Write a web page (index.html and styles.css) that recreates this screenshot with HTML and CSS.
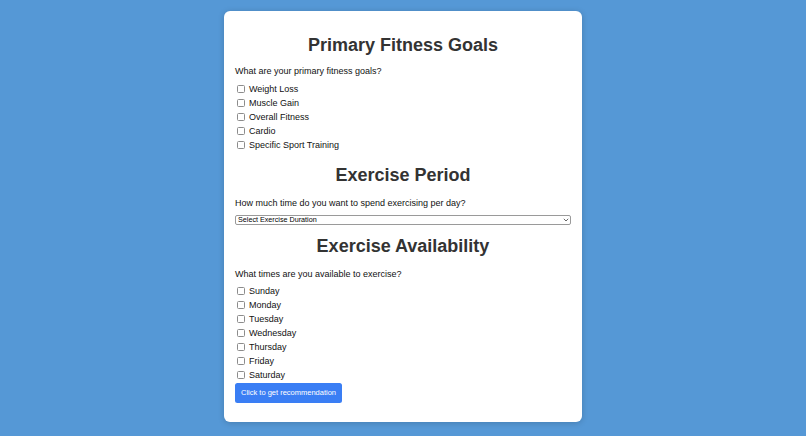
FILE: index.html
```html
<!DOCTYPE html>
<html lang="en">
<head>
<meta charset="utf-8">
<title>Fitness Goals</title>
<link rel="stylesheet" href="styles.css">
</head>
<body>
<main class="card">
  <form class="form">
    <h1 class="title">Primary Fitness Goals</h1>
    <p class="question">What are your primary fitness goals?</p>
    <div class="options">
      <label class="option"><input type="checkbox" class="check"><span>Weight Loss</span></label>
      <label class="option"><input type="checkbox" class="check"><span>Muscle Gain</span></label>
      <label class="option"><input type="checkbox" class="check"><span>Overall Fitness</span></label>
      <label class="option"><input type="checkbox" class="check"><span>Cardio</span></label>
      <label class="option"><input type="checkbox" class="check"><span>Specific Sport Training</span></label>
    </div>

    <h1 class="title title-mid">Exercise Period</h1>
    <p class="question q2">How much time do you want to spend exercising per day?</p>
    <div class="select-wrap">
      <select class="select">
        <option>Select Exercise Duration</option>
        <option>15 minutes</option>
        <option>30 minutes</option>
        <option>45 minutes</option>
        <option>1 hour</option>
      </select>
      <svg class="chevron" width="6" height="4" viewBox="0 0 6 4"><path d="M0.8 0.8 L3 3 L5.2 0.8" fill="none" stroke="#555" stroke-width="0.9"/></svg>
    </div>

    <h1 class="title title-low">Exercise Availability</h1>
    <p class="question q3">What times are you available to exercise?</p>
    <div class="options days">
      <label class="option"><input type="checkbox" class="check"><span>Sunday</span></label>
      <label class="option"><input type="checkbox" class="check"><span>Monday</span></label>
      <label class="option"><input type="checkbox" class="check"><span>Tuesday</span></label>
      <label class="option"><input type="checkbox" class="check"><span>Wednesday</span></label>
      <label class="option"><input type="checkbox" class="check"><span>Thursday</span></label>
      <label class="option"><input type="checkbox" class="check"><span>Friday</span></label>
      <label class="option"><input type="checkbox" class="check"><span>Saturday</span></label>
    </div>
    <button type="button" class="btn">Click to get recommendation</button>
  </form>
</main>
</body>
</html>
```
FILE: styles.css
```css
html, body {
  margin: 0;
  padding: 0;
}
body {
  background: #5598d6;
  font-family: "Liberation Sans", Arial, Helvetica, sans-serif;
  font-size: 9px;
  color: #111;
  height: 436px;
  overflow: hidden;
}
.card {
  width: 336px;
  margin: 11px auto 0;
  padding: 12px 11px 19px;
  background: #ffffff;
  border-radius: 6px;
  box-shadow: 0 1px 6px rgba(0, 0, 0, 0.18);
}
.form {
  display: flex;
  flex-direction: column;
}
.title {
  margin: 12px 0 0;
  font-size: 18px;
  line-height: 21px;
  font-weight: bold;
  text-align: center;
  color: #333;
}
.title-mid {
  margin-top: 13px;
}
.title-low {
  margin-top: 11px;
}
.question {
  margin: 10px 0 0;
  line-height: 10px;
}
.q2 {
  margin-top: 12px;
}
.q3 {
  margin-top: 12px;
}
.options {
  display: flex;
  flex-direction: column;
  margin-top: 6px;
}
.days {
  margin-top: 5px;
}
.option {
  display: flex;
  align-items: center;
  height: 14px;
  line-height: 14px;
}
.check {
  -webkit-appearance: none;
  appearance: none;
  width: 7.5px;
  height: 7.5px;
  margin: 0 4.5px 0 2px;
  border: 1px solid #8c8c8c;
  border-radius: 1.5px;
  background: #fff;
  box-sizing: border-box;
  flex: none;
}
.select-wrap {
  position: relative;
  margin-top: 7px;
}
.select {
  -webkit-appearance: none;
  appearance: none;
  display: block;
  width: 100%;
  height: 10px;
  margin: 0;
  padding: 0 0 0 2px;
  border: 0.75px solid #9a9a9a;
  border-radius: 2px;
  background: #fff;
  font-family: "Liberation Sans", Arial, Helvetica, sans-serif;
  font-size: 7.2px;
  line-height: 8px;
  color: #000;
  box-sizing: border-box;
}
.chevron {
  position: absolute;
  right: 2px;
  top: 3px;
}
.btn {
  align-self: flex-start;
  margin: 1px 0 0;
  height: 20px;
  padding: 0 6px;
  border: none;
  border-radius: 2.5px;
  background: #3a7ef4;
  color: #fff;
  font-family: "Liberation Sans", Arial, Helvetica, sans-serif;
  font-size: 7.5px;
  line-height: 20px;
}
```
